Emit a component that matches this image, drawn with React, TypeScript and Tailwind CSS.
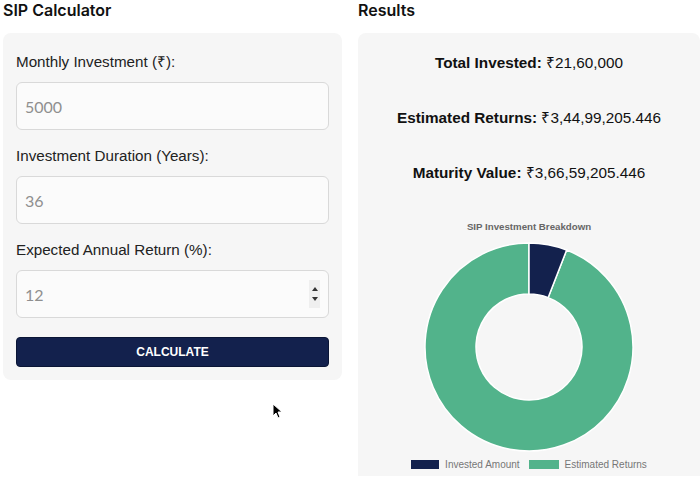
import React from "react"

const NAVY = "#13214d"
const GREEN = "#52b38b"

const invested = 2160000
const maturity = 36659205.446

// donut slice path between two angles (degrees, 0 = top, clockwise)
const slice = (cx: number, cy: number, R: number, r: number, a0: number, a1: number) => {
  const p = (rad: number, a: number) => {
    const t = ((a - 90) * Math.PI) / 180
    return `${(cx + rad * Math.cos(t)).toFixed(2)} ${(cy + rad * Math.sin(t)).toFixed(2)}`
  }
  const large = a1 - a0 > 180 ? 1 : 0
  return `M ${p(R, a0)} A ${R} ${R} 0 ${large} 1 ${p(R, a1)} L ${p(r, a1)} A ${r} ${r} 0 ${large} 0 ${p(r, a0)} Z`
}

const Field = ({ label, value, spinner }: { label: string; value: string; spinner?: boolean }) => (
  <div className="flex flex-col">
    <label className="mb-[9px] text-[15.2px] leading-[22px] text-[#222] [font-family:'Liberation_Sans',Arial,sans-serif]">
      {label}
    </label>
    <div className="relative">
      <input
        readOnly
        value={value}
        className="h-[48px] w-full rounded-[6px] border border-[#d9d9d9] bg-[#fbfbfb] px-[8px] text-[16px] text-[#8f8f8f] outline-none [font-family:Lato,sans-serif]"
      />
      {spinner && (
        <div className="absolute right-[9px] top-[10px] flex h-[28px] w-[11px] flex-col items-center justify-center gap-[6px] bg-[#efefef]">
          <svg width="6" height="4" viewBox="0 0 6 4">
            <path d="M0 4 L3 0 L6 4 Z" fill="#333" />
          </svg>
          <svg width="6" height="4" viewBox="0 0 6 4">
            <path d="M0 0 L6 0 L3 4 Z" fill="#333" />
          </svg>
        </div>
      )}
    </div>
  </div>
)

const ResultLine = ({ label, value }: { label: string; value: string }) => (
  <div className="h-[55px] text-center text-[15.3px] leading-[22px] text-[#111] [font-family:'Liberation_Sans',Arial,sans-serif]">
    <span className="font-bold">{label}</span> {value}
  </div>
)

export default function App() {
  const frac = invested / maturity
  const a = 360 * frac
  const cx = 105
  const cy = 105

  return (
    <div className="relative flex h-[477px] w-[700px] gap-[16px] overflow-hidden bg-white pl-[3px]">
      <div className="flex w-[339px] flex-col">
        <h2 className="h-[33px] text-[16px] font-semibold leading-[20px] text-[#111] [font-family:Inter,sans-serif]">
          SIP Calculator
        </h2>
        <div className="flex flex-col gap-[15px] rounded-[8px] bg-[#f6f6f6] px-[13px] pb-[13px] pt-[18px]">
          <Field label="Monthly Investment (₹):" value="5000" />
          <Field label="Investment Duration (Years):" value="36" />
          <Field label="Expected Annual Return (%):" value="12" spinner />
          <button
            className="mt-[4px] h-[30px] rounded-[4px] border border-[#0a1535] text-[12px] font-bold text-white [font-family:'Liberation_Sans',Arial,sans-serif]"
            style={{ backgroundColor: NAVY }}
          >
            CALCULATE
          </button>
        </div>
      </div>

      <div className="flex w-[342px] flex-col">
        <h2 className="h-[33px] text-[16px] font-semibold leading-[20px] text-[#111] [font-family:Inter,sans-serif]">
          Results
        </h2>
        <div className="flex h-[443px] flex-col items-center rounded-t-[8px] bg-[#f6f6f6] pt-[19px]">
          <ResultLine label="Total Invested:" value="₹21,60,000" />
          <ResultLine label="Estimated Returns:" value="₹3,44,99,205.446" />
          <ResultLine label="Maturity Value:" value="₹3,66,59,205.446" />
          <div className="mt-[3px] text-[9.7px] font-bold leading-[14px] text-[#666] [font-family:'Liberation_Sans',Arial,sans-serif]">
            SIP Investment Breakdown
          </div>
          <svg width="210" height="210" viewBox="0 0 210 210" className="mt-[8px]">
            <path d={slice(cx, cy, 104, 53, a, 360)} fill={GREEN} stroke="#fff" strokeWidth="1.5" />
            <path d={slice(cx, cy, 104, 53, 0, a)} fill={NAVY} stroke="#fff" strokeWidth="1.5" />
          </svg>
          <div className="mt-[5px] flex items-center gap-[9px] text-[10px] text-[#777] [font-family:'Liberation_Sans',Arial,sans-serif]">
            <div className="flex items-center gap-[6px]">
              <span className="h-[9px] w-[28px]" style={{ backgroundColor: NAVY }} />
              <span>Invested Amount</span>
            </div>
            <div className="flex items-center gap-[6px]">
              <span className="h-[9px] w-[30px]" style={{ backgroundColor: GREEN }} />
              <span>Estimated Returns</span>
            </div>
          </div>
        </div>
      </div>

      <svg className="absolute left-[272px] top-[403px]" width="10" height="16" viewBox="0 0 10 16">
        <path d="M1 1 L1 13 L4 10 L6 15 L8 14 L6 9 L10 9 Z" fill="#000" stroke="#fff" strokeWidth="1" />
      </svg>
    </div>
  )
}
